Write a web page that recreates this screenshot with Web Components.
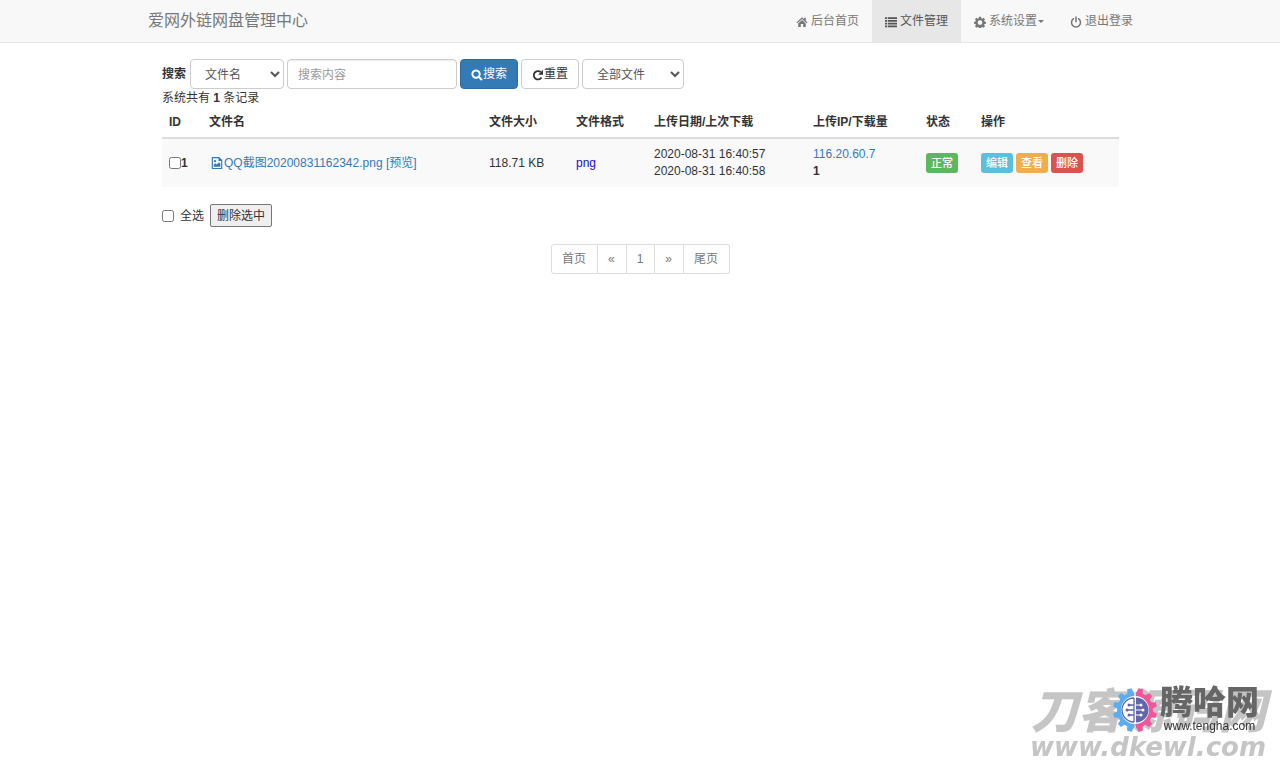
<!DOCTYPE html>
<html lang="zh-CN">
<head>
<meta charset="utf-8">
<meta name="viewport" content="width=device-width, initial-scale=1">
<title>爱网外链网盘管理中心</title>
<style>
  body {
    margin: 0;
    background: #fff;
    color: #333;
    font: 12px/17px "Liberation Sans", "Noto Sans CJK SC", sans-serif;
  }
  main {
    box-sizing: border-box;
    max-width: 1012px;
    margin: 0 auto;
    padding: 16px 27px 16px 28px;
  }
  .summary { padding-top: 1px; }
</style>
</head>
<body>
<admin-navbar>
  <span slot="brand">爱网外链网盘管理中心</span>
  <nav-item icon="home">后台首页</nav-item>
  <nav-item icon="list" active>文件管理</nav-item>
  <nav-item icon="cog" menu>系统设置</nav-item>
  <nav-item icon="off">退出登录</nav-item>
</admin-navbar>
<main>
  <search-form></search-form>
  <div class="summary">系统共有 <b>1</b> 条记录</div>
  <file-table></file-table>
  <bulk-actions></bulk-actions>
  <page-nav></page-nav>
</main>
<site-mark></site-mark>

<script>
const define = (name, html, setup) => {
  const template = document.createElement('template');
  template.innerHTML = html;
  customElements.define(name, class extends HTMLElement {
    constructor() {
      super();
      this.attachShadow({ mode: 'open' }).append(template.content.cloneNode(true));
    }
    connectedCallback() {
      if (setup) setup(this, this.shadowRoot);
    }
  });
};

const icons = {
  home: '<path d="M8 1.6 0.6 8.6 1.8 9.8 8 4l6.2 5.8 1.2-1.2-2.4-2.3V2.4h-2.2v1.800z"/><path d="M3 10 8 5.400 13 10v4.600H9.600v-4H6.400v4H3z"/>',
  list: '<path d="M0 1.500h3v2.400H0zM4 1.500h12v2.400H4zM0 5.200h3v2.400H0zM4 5.200h12v2.400H4zM0 8.900h3v2.400H0zM4 8.900h12v2.400H4zM0 12.600h3V15H0zM4 12.600h12V15H4z"/>',
  cog: '<path fill-rule="evenodd" d="M6.600 1h2.800l.4 2 1.200.5 1.700-1.200 2 2-1.200 1.700.5 1.200 2 .4v2.800l-2 .4-.5 1.200 1.200 1.700-2 2-1.700-1.200-1.200.5-.4 2H6.600l-.4-2-1.200-.5-1.700 1.200-2-2L2.500 12 2 10.800l-2-.4V7.600l2-.4L2.500 6 1.300 4.300l2-2L5 3.500 6.200 3zM8 5.700a3.100 3.100 0 1 0 0 6.200 3.100 3.100 0 0 0 0-6.200z"/>',
  off: '<path fill="none" stroke="currentColor" stroke-width="2" stroke-linecap="round" d="M4.700 3.600a6 6 0 1 0 6.600 0M8 1.400v6.400"/>',
  search: '<path fill="none" stroke="currentColor" stroke-width="2.600" d="M6.700 1.900a4.900 4.900 0 1 0 0 9.800 4.900 4.900 0 0 0 0-9.800z"/><path d="m9.400 11.300 1.900-1.900 4.300 4.200-2 2z"/>',
  repeat: '<path fill="none" stroke="currentColor" stroke-width="2.400" d="M12.700 11.400A5.600 5.600 0 1 1 11.600 4"/><path d="M14.700 1v6.500H8.200z"/>',
  picture: '<path fill-rule="evenodd" d="M1 0h10l4 4v12H1zm1.500 1.500v13h11V5.200H10V1.500z"/><path d="M3.500 13v-2.200L6 8.300l1.800 1.800 3-3 1.700 2V13z"/><circle cx="5.400" cy="5.500" r="1.500"/>'
};

define('app-icon', `
  <style>
    :host { display: inline-block; width: 12px; height: 12px; vertical-align: -2px; }
    svg { display: block; width: 100%; height: 100%; fill: currentColor; }
  </style>
  <svg viewBox="0 0 16 16" aria-hidden="true"></svg>`,
  (host, root) => { root.querySelector('svg').innerHTML = icons[host.getAttribute('name')] || ''; });

define('nav-item', `
  <style>
    :host { display: block; color: #777; }
    :host([active]) { background: #e7e7e7; color: #555; }
    a { display: flex; align-items: center; padding: 13px 13px 12px; color: inherit; text-decoration: none; white-space: nowrap; }
    .icon { display: flex; margin-right: 3px; }
    .caret { display: none; margin-left: 1px; border: 3px solid transparent; border-top: 3px solid; border-bottom: 0; }
    :host([menu]) .caret { display: block; }
  </style>
  <a href="#"><span class="icon"></span><slot></slot><span class="caret"></span></a>`,
  (host, root) => {
    root.querySelector('.icon').innerHTML = '<app-icon name="' + host.getAttribute('icon') + '"></app-icon>';
  });

define('admin-navbar', `
  <style>
    :host { display: block; background: #f8f8f8; border-bottom: 1px solid #e7e7e7; }
    nav { display: flex; flex-wrap: wrap; justify-content: space-between; align-items: center; max-width: 1012px; margin: 0 auto; }
    .brand { padding-left: 14px; color: #777; font-size: 16px; line-height: 20px; text-decoration: none; }
    .items { display: flex; flex-wrap: wrap; }
  </style>
  <nav><a class="brand" href="#"><slot name="brand"></slot></a><div class="items"><slot></slot></div></nav>`);

define('search-form', `
  <style>
    :host { display: block; }
    form { display: flex; flex-wrap: wrap; align-items: center; gap: 3px; }
    label { font-weight: 700; margin-right: 1px; }
    select, input, button { box-sizing: border-box; height: 30px; margin: 0; border: 1px solid #ccc; border-radius: 4px; background-color: #fff; font: inherit; color: #555; }
    select { padding: 1px 10px 0; }
    .field { width: 94px; }
    .kind { width: 102px; }
    input { width: 170px; padding: 1px 10px 0; box-shadow: inset 0 1px 1px rgba(0,0,0,.075); }
    input::placeholder { color: #999; }
    button { display: flex; align-items: center; padding: 1px 10px 0; color: #333; white-space: nowrap; }
    .primary { background: #337ab7; border-color: #2e6da4; color: #fff; }
  </style>
  <form onsubmit="return false">
    <label for="field">搜索</label>
    <select id="field" class="field"><option>文件名</option></select>
    <input type="text" placeholder="搜索内容" aria-label="搜索内容">
    <button class="primary"><app-icon name="search"></app-icon>搜索</button>
    <button type="reset"><app-icon name="repeat"></app-icon>重置</button>
    <select class="kind" aria-label="文件类型"><option>全部文件</option></select>
  </form>`);

define('file-table', `
  <style>
    :host { display: block; }
    table { width: 100%; table-layout: fixed; border-spacing: 0; font: inherit; }
    th, td { padding: 7px; text-align: left; vertical-align: middle; white-space: nowrap; }
    th { padding-bottom: 6px; border-bottom: 2px solid #ddd; }
    td { background: #f9f9f9; }
    a { color: #337ab7; text-decoration: none; }
    .check { display: flex; align-items: center; }
    .check input { width: 12px; height: 12px; margin: 0; }
    .name app-icon { margin-left: 2px; margin-right: 1px; }
    .format { color: #1a0dcc; }
    .actions { display: flex; gap: 3px; }
    .id { width: 26px; } .size { width: 73px; } .type { width: 64px; }
    .date { width: 145px; } .ip { width: 99px; } .state { width: 41px; } .ops { width: 131px; }
    button { border: 0; border-radius: 3px; margin: 0; padding: 2px 5px; color: #fff; font: 500 11px/16px "Liberation Sans", "Noto Sans CJK SC", sans-serif; }
    .green { background: #5cb85c; } .cyan { background: #5bc0de; }
    .orange { background: #f0ad4e; } .red { background: #d9534f; }
  </style>
  <table>
    <thead><tr>
      <th class="id">ID</th><th>文件名</th><th class="size">文件大小</th><th class="type">文件格式</th>
      <th class="date">上传日期/上次下载</th><th class="ip">上传IP/下载量</th><th class="state">状态</th><th class="ops">操作</th>
    </tr></thead>
    <tbody><tr>
      <td><label class="check"><input type="checkbox"><b>1</b></label></td>
      <td class="name"><a href="#"><app-icon name="picture"></app-icon>QQ截图20200831162342.png</a> <a href="#">[预览]</a></td>
      <td>118.71 KB</td>
      <td class="format">png</td>
      <td>2020-08-31 16:40:57<br>2020-08-31 16:40:58</td>
      <td><a href="#">116.20.60.7</a><br><b>1</b></td>
      <td><div class="actions"><button class="green">正常</button></div></td>
      <td><div class="actions"><button class="cyan">编辑</button><button class="orange">查看</button><button class="red">删除</button></div></td>
    </tr></tbody>
  </table>`);

define('bulk-actions', `
  <style>
    :host { display: flex; align-items: center; gap: 6px; margin-top: 17px; }
    label { display: flex; align-items: center; gap: 6px; padding-top: 1px; }
    input { width: 12px; height: 12px; margin: 0; }
    button { margin: 0; padding: 3px 6px 1px; border: 1px solid #767676; border-radius: 2px; background: #efefef; color: #333; font: inherit; }
  </style>
  <label><input type="checkbox">全选</label>
  <button>删除选中</button>`);

define('page-nav', `
  <style>
    :host { display: block; margin-top: 17px; }
    nav { display: flex; justify-content: center; }
    a { padding: 6px 11px 5px 10px; border: 1px solid #ddd; border-left-width: 0; color: #777; text-decoration: none; }
    a:first-child { border-left-width: 1px; border-radius: 3px 0 0 3px; }
    a:last-child { border-radius: 0 3px 3px 0; }
  </style>
  <nav aria-label="分页"><a href="#">首页</a><a href="#">«</a><a href="#">1</a><a href="#">»</a><a href="#">尾页</a></nav>`);

/* Site signature in the lower right corner, with the partner badge lying over it. */
define('site-mark', `
  <style>
    :host { position: fixed; right: 14px; bottom: 0; white-space: nowrap; pointer-events: none; }
    .base { color: #c5c5c5; font-style: italic; font-weight: 900; text-align: right; }
    .big { font-size: 47px; line-height: 42px; }
    .url { font: italic 700 26px/28px "DejaVu Sans", sans-serif; }
    .badge { position: absolute; right: 7px; bottom: 28px; display: flex; align-items: center; gap: 2px; color: #555; }
    svg { width: 46px; height: 46px; }
    .name { font-size: 33px; line-height: 32px; font-weight: 900; color: #666; }
    .site { font-size: 12px; line-height: 14px; color: #333; text-align: center; }
  </style>
  <div class="base"><div class="big">刀客源码网</div><div class="url">www.dkewl.com</div></div>
  <div class="badge">
    <svg viewBox="-23 -23 46 46" aria-hidden="true">
      <defs>
        <clipPath id="l"><path d="M-23-23H-.7V23H-23z"/></clipPath>
        <clipPath id="r"><path d="M.7-23H23V23H.7z"/></clipPath>
        <g id="gear"><circle r="18"/><g id="teeth"></g></g>
      </defs>
      <use href="#gear" fill="#5badf0" clip-path="url(#l)"/>
      <use href="#gear" fill="#f0569b" clip-path="url(#r)"/>
      <circle r="14" fill="#fff"/>
      <path fill="#6165ab" d="M1-12.500A12.500 12.500 0 0 1 1 12.500z"/>
      <path fill="none" stroke="#6165ab" stroke-width="1.300" d="M-1-12A12 12 0 0 0-1 12M-1-12V12M-1-5H-6M-1 0H-9M-1 5H-6"/>
      <g fill="#6165ab"><circle cx="-6" cy="-5" r="1.500"/><circle cx="-8" r="1.500"/><circle cx="-6" cy="5" r="1.500"/></g>
      <path stroke="#fff" d="M1-5H6M1 0H8M1 5H6"/>
      <g fill="#fff"><circle cx="6" cy="-5" r="1.500"/><circle cx="8" r="1.500"/><circle cx="6" cy="5" r="1.500"/></g>
    </svg>
    <div><div class="name">腾哈网</div><div class="site">www.tengha.com</div></div>
  </div>`,
  (host, root) => {
    root.querySelector('#teeth').innerHTML = Array.from({ length: 12 }, (_, i) =>
      '<path transform="rotate(' + (i * 30 + 15) + ')" d="M-3.500-16-2.200-22H2.200L3.500-16z"/>').join('');
  });
</script>
</body>
</html>
